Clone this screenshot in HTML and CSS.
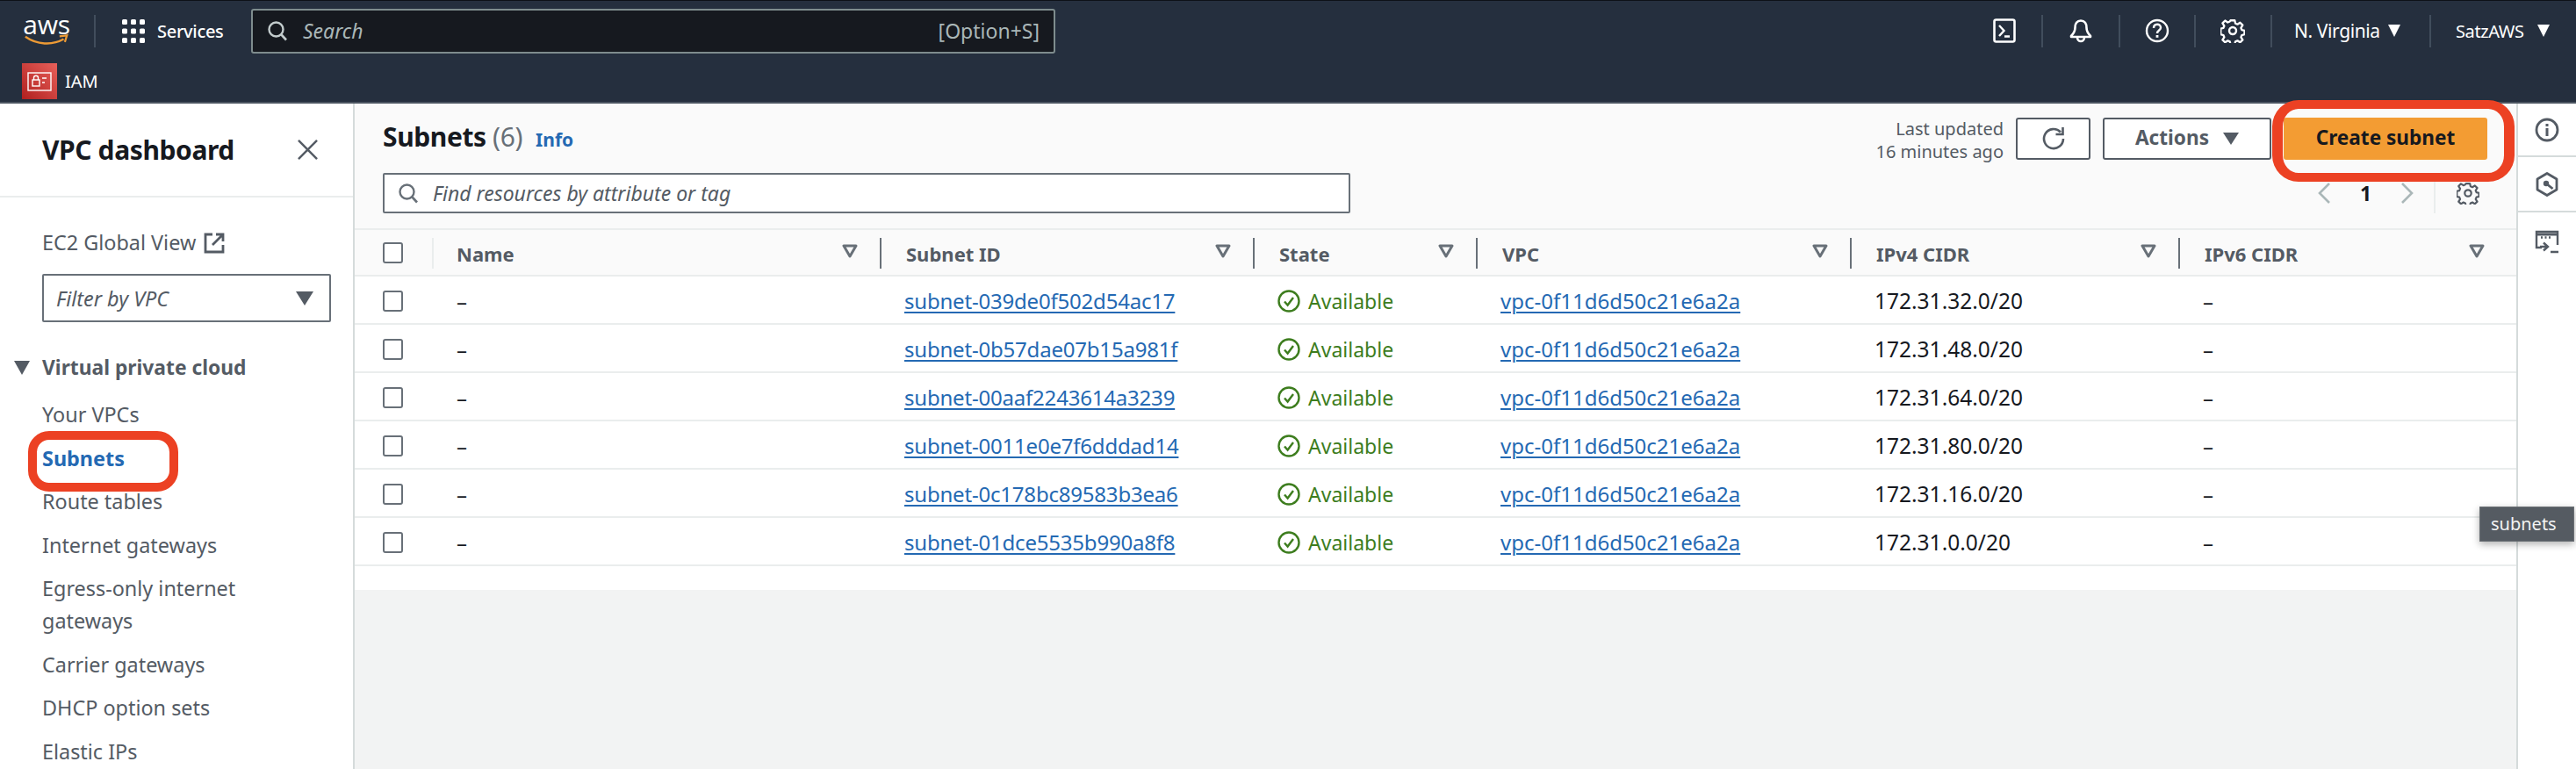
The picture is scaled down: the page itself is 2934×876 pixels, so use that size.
FILE: index.html
```html
<!DOCTYPE html>
<html lang="en">
<head>
<meta charset="utf-8">
<title>Subnets | VPC Console</title>
<link rel="stylesheet" href="styles.css">
</head>
<body>
<svg class="sprite" xmlns="http://www.w3.org/2000/svg">
  <symbol id="i-search" viewBox="0 0 24 24"><circle cx="10.5" cy="10.5" r="8" fill="none" stroke="currentColor" stroke-width="2.4"/><path d="M16.5 16.5 22 22.5" fill="none" stroke="currentColor" stroke-width="2.6"/></symbol>
  <symbol id="i-filter" viewBox="0 0 18 16"><path d="M2 2h14L9 14z" fill="none" stroke="currentColor" stroke-width="3" stroke-linejoin="round"/></symbol>
  <symbol id="i-ok" viewBox="0 0 26 26"><circle cx="13" cy="13" r="11.5" fill="none" stroke="currentColor" stroke-width="2.4"/><path d="M8 13.5l3.6 4L18 9" fill="none" stroke="currentColor" stroke-width="2.4"/></symbol>
  <symbol id="i-gear" viewBox="0 0 28 28"><path d="M11.5 2h5l.8 3.6 2.4 1 3.1-2 3 3-2 3.200 1 2.400 3.200.8v4.500l-3.200.8-1 2.400 2 3.100-3 3-3.100-2-2.400 1-.8 3.200h-5l-.8-3.200-2.400-1-3.100 2-3-3 2-3.100-1-2.400-3.200-.8V11.700l3.200-.8 1-2.400-2-3.200 3-3 3.100 2 2.400-1z" transform="translate(.3 .3) scale(.97)" fill="none" stroke="currentColor" stroke-width="2.4" stroke-linejoin="round"/><circle cx="14" cy="14" r="4" fill="none" stroke="currentColor" stroke-width="2.400"/></symbol>
</svg>

<div class="page">
  <header class="topnav">
    <div class="nav-main">
      <div class="logo">
        <span class="logo-text">aws</span>
        <svg class="logo-smile" viewBox="0 0 54 14"><path d="M1 3c14 10 33 11 47 3" fill="none" stroke="#ec9a35" stroke-width="2.600"/><path d="M43 2.500l9-1-2.500 8" fill="none" stroke="#ec9a35" stroke-width="2.400"/></svg>
      </div>
      <span class="nav-sep nav-sep-logo"></span>
      <svg class="grid-icon" viewBox="0 0 26 27"><g fill="#fff"><rect width="6" height="6" rx="1.500"/><rect x="10" width="6" height="6" rx="1.500"/><rect x="20" width="6" height="6" rx="1.500"/><rect y="10.500" width="6" height="6" rx="1.500"/><rect x="10" y="10.500" width="6" height="6" rx="1.500"/><rect x="20" y="10.500" width="6" height="6" rx="1.500"/><rect y="21" width="6" height="6" rx="1.500"/><rect x="10" y="21" width="6" height="6" rx="1.500"/><rect x="20" y="21" width="6" height="6" rx="1.500"/></g></svg>
      <span class="services">Services</span>
      <div class="search">
        <svg class="search-icon"><use href="#i-search"/></svg>
        <span class="search-text">Search</span>
        <span class="search-key">[Option+S]</span>
      </div>
      <div class="nav-right">
        <svg class="nav-icon nav-term" viewBox="0 0 26 28"><rect x="1.500" y="1.500" width="23" height="25" rx="2" fill="none" stroke="#fff" stroke-width="2.600"/><path d="M7 8l5.500 6L7 20M13 20.500h6" fill="none" stroke="#fff" stroke-width="2.400"/></svg>
        <span class="nav-sep nav-sep-a"></span>
        <svg class="nav-icon nav-bell" viewBox="0 0 28 28"><path d="M14 2.500c-4.500 0-6.500 3.500-6.500 8 0 5-2 7-4.500 9.500v1h22v-1c-2.500-2.500-4.500-4.500-4.500-9.500 0-4.500-2-8-6.500-8z" fill="none" stroke="#fff" stroke-width="2.600" stroke-linejoin="round"/><path d="M10 21.500c0 6 8 6 8 0" fill="none" stroke="#fff" stroke-width="2.600"/></svg>
        <span class="nav-sep nav-sep-b"></span>
        <svg class="nav-icon nav-help" viewBox="0 0 28 28"><circle cx="14" cy="14" r="12" fill="none" stroke="#fff" stroke-width="2.400"/><path d="M10 11c0-5.500 8-5.500 8-.5 0 3-4 3-4 6.500" fill="none" stroke="#fff" stroke-width="2.400"/><rect x="12.600" y="19" width="2.800" height="2.800" fill="#fff"/></svg>
        <span class="nav-sep nav-sep-c"></span>
        <svg class="nav-icon nav-gear"><use href="#i-gear"/></svg>
        <span class="nav-sep nav-sep-d"></span>
        <span class="nav-label region">N. Virginia</span>
        <span class="caret caret-white caret-region"></span>
        <span class="nav-sep nav-sep-e"></span>
        <span class="nav-label user">SatzAWS</span>
        <span class="caret caret-white caret-user"></span>
      </div>
    </div>
    <div class="nav-sub">
      <svg class="iam-icon" viewBox="0 0 40 41"><defs><linearGradient id="iamg" x1="0" y1="1" x2="1" y2="0"><stop offset="0" stop-color="#b0201f"/><stop offset="1" stop-color="#e8605a"/></linearGradient></defs><rect width="40" height="41" fill="url(#iamg)"/><rect x="7" y="11" width="26" height="20" fill="none" stroke="#fff" stroke-width="1.400"/><rect x="12" y="19" width="8" height="7" fill="none" stroke="#fff" stroke-width="1.400"/><path d="M13.500 19v-2.500c0-3 5-3 5 0V19M23 17h5M23 22h3" fill="none" stroke="#fff" stroke-width="1.400"/></svg>
      <span class="iam-label">IAM</span>
    </div>
  </header>

  <div class="shell">
    <aside class="side">
      <div class="side-head">
        <h2 class="side-title">VPC dashboard</h2>
        <svg class="side-close" viewBox="0 0 24 24"><path d="M1 1l22 22M23 1 1 23" fill="none" stroke="#545b64" stroke-width="2.600"/></svg>
      </div>
      <div class="side-body">
        <div class="global-view">
          <span>EC2 Global View</span>
          <svg class="ext-icon" viewBox="0 0 24 24"><path d="M10 2H2v20h20v-8" fill="none" stroke="#545b64" stroke-width="2.800"/><path d="M14 2h8v8M22 2 10 14" fill="none" stroke="#545b64" stroke-width="2.800"/></svg>
        </div>
        <div class="vpc-filter">
          <span class="vpc-filter-text">Filter by VPC</span>
          <span class="caret caret-grey caret-filter"></span>
        </div>
        <div class="section-head">
          <span class="caret caret-grey caret-section"></span>
          <span>Virtual private cloud</span>
        </div>
        <ul class="side-list">
          <li>Your VPCs</li>
          <li class="active">Subnets</li>
          <li>Route tables</li>
          <li>Internet gateways</li>
          <li>Egress-only internet gateways</li>
          <li>Carrier gateways</li>
          <li>DHCP option sets</li>
          <li>Elastic IPs</li>
        </ul>
      </div>
    </aside>

    <main class="content">
      <section class="panel-head">
        <div class="head-row">
          <div class="title-wrap">
            <h1 class="title">Subnets <span class="count">(6)</span></h1>
            <a class="info">Info</a>
          </div>
          <div class="head-actions">
            <div class="updated">Last updated<br>16 minutes ago</div>
            <button class="btn btn-refresh"><svg class="refresh-icon" viewBox="0 0 28 28"><path d="M22 6.500A11 11 0 1 0 25 14" fill="none" stroke="#545b64" stroke-width="2.600"/><path d="M24.500 1v8h-8" fill="none" stroke="#545b64" stroke-width="2.600"/></svg></button>
            <button class="btn btn-actions">Actions <span class="caret caret-grey caret-actions"></span></button>
            <button class="btn btn-primary">Create subnet</button>
          </div>
        </div>
        <div class="tool-row">
          <div class="find">
            <svg class="find-icon"><use href="#i-search"/></svg>
            <span class="find-text">Find resources by attribute or tag</span>
          </div>
          <div class="pager">
            <svg class="pg-arrow" viewBox="0 0 16 26"><path d="M14 2 3 13l11 11" fill="none" stroke="#aab7b8" stroke-width="2.600"/></svg>
            <span class="pg-num">1</span>
            <svg class="pg-arrow" viewBox="0 0 16 26"><path d="m2 2 11 11L2 24" fill="none" stroke="#aab7b8" stroke-width="2.600"/></svg>
            <span class="pg-sep"></span>
            <svg class="pg-gear"><use href="#i-gear"/></svg>
          </div>
        </div>
      </section>

      <div class="table">
        <div class="tr thead">
          <div class="td td-check"><span class="check"></span></div>
          <div class="td th th-name">Name<svg class="filter"><use href="#i-filter"/></svg></div>
          <div class="td th">Subnet ID<svg class="filter"><use href="#i-filter"/></svg></div>
          <div class="td th">State<svg class="filter"><use href="#i-filter"/></svg></div>
          <div class="td th">VPC<svg class="filter"><use href="#i-filter"/></svg></div>
          <div class="td th">IPv4 CIDR<svg class="filter"><use href="#i-filter"/></svg></div>
          <div class="td th">IPv6 CIDR<svg class="filter"><use href="#i-filter"/></svg></div>
        </div>
        <div class="tr"><div class="td td-check"><span class="check"></span></div><div class="td">–</div><div class="td"><a class="link link-subnet">subnet-039de0f502d54ac17</a></div><div class="td state"><svg class="ok"><use href="#i-ok"/></svg>Available</div><div class="td"><a class="link">vpc-0f11d6d50c21e6a2a</a></div><div class="td cidr">172.31.32.0/20</div><div class="td">–</div></div>
        <div class="tr"><div class="td td-check"><span class="check"></span></div><div class="td">–</div><div class="td"><a class="link link-subnet">subnet-0b57dae07b15a981f</a></div><div class="td state"><svg class="ok"><use href="#i-ok"/></svg>Available</div><div class="td"><a class="link">vpc-0f11d6d50c21e6a2a</a></div><div class="td cidr">172.31.48.0/20</div><div class="td">–</div></div>
        <div class="tr"><div class="td td-check"><span class="check"></span></div><div class="td">–</div><div class="td"><a class="link link-subnet">subnet-00aaf2243614a3239</a></div><div class="td state"><svg class="ok"><use href="#i-ok"/></svg>Available</div><div class="td"><a class="link">vpc-0f11d6d50c21e6a2a</a></div><div class="td cidr">172.31.64.0/20</div><div class="td">–</div></div>
        <div class="tr"><div class="td td-check"><span class="check"></span></div><div class="td">–</div><div class="td"><a class="link link-subnet">subnet-0011e0e7f6dddad14</a></div><div class="td state"><svg class="ok"><use href="#i-ok"/></svg>Available</div><div class="td"><a class="link">vpc-0f11d6d50c21e6a2a</a></div><div class="td cidr">172.31.80.0/20</div><div class="td">–</div></div>
        <div class="tr"><div class="td td-check"><span class="check"></span></div><div class="td">–</div><div class="td"><a class="link link-subnet">subnet-0c178bc89583b3ea6</a></div><div class="td state"><svg class="ok"><use href="#i-ok"/></svg>Available</div><div class="td"><a class="link">vpc-0f11d6d50c21e6a2a</a></div><div class="td cidr">172.31.16.0/20</div><div class="td">–</div></div>
        <div class="tr"><div class="td td-check"><span class="check"></span></div><div class="td">–</div><div class="td"><a class="link link-subnet">subnet-01dce5535b990a8f8</a></div><div class="td state"><svg class="ok"><use href="#i-ok"/></svg>Available</div><div class="td"><a class="link">vpc-0f11d6d50c21e6a2a</a></div><div class="td cidr">172.31.0.0/20</div><div class="td">–</div></div>
        <div class="table-foot"></div>
      </div>
    </main>

    <aside class="rail">
      <div class="rail-item rail-first"><svg class="rail-icon" viewBox="0 0 28 28"><circle cx="14" cy="14" r="12" fill="none" stroke="#545b64" stroke-width="2.800"/><rect x="12.500" y="12" width="3" height="9" fill="#545b64"/><rect x="12.500" y="7" width="3" height="3" fill="#545b64"/></svg></div>
      <div class="rail-item"><svg class="rail-icon" viewBox="0 0 28 28"><path d="M14 1.500 25 8v12l-11 6.500L3 20V8z" fill="none" stroke="#545b64" stroke-width="2.800" stroke-linejoin="round"/><circle cx="13" cy="13" r="3.200" fill="#545b64"/><path d="m13 13 7.500 6" fill="none" stroke="#545b64" stroke-width="2.800"/></svg></div>
      <div class="rail-item rail-last"><svg class="rail-icon" viewBox="0 0 28 28"><path d="M8 20H2V2h24v15" fill="none" stroke="#545b64" stroke-width="2.400"/><path d="M2 5h24" stroke="#545b64" stroke-width="3"/><path d="M7 8.500h2M11.500 8.500h2M16 8.500h2" stroke="#545b64" stroke-width="2.400"/><path d="M6 19h8M10 14.500l5 4.500-5 4.500M18 25h9" fill="none" stroke="#545b64" stroke-width="2.400"/></svg></div>
    </aside>
  </div>

  <div class="tooltip">subnets</div>
  <div class="mark mark-create"></div>
  <div class="mark mark-subnets"></div>
</div>
</body>
</html>
```

FILE: styles.css
```css
* { box-sizing: border-box; }
html, body { margin: 0; padding: 0; }
body { font-family: "Noto Sans", "Open Sans", sans-serif; color: #16191f; background: #f2f3f3; }
.sprite { position: absolute; width: 0; height: 0; overflow: hidden; }
.page { position: relative; width: 2934px; height: 876px; overflow: hidden; display: flex; flex-direction: column; }

/* top navigation */
.topnav { height: 118px; flex: none; background: #252f3e; border-top: 1px solid #0d1117; border-bottom: 2px solid #4b5460; color: #fff; }
.nav-main { height: 70px; display: flex; align-items: center; padding-left: 26px; }
.logo { width: 54px; height: 36px; display: flex; flex-direction: column; align-items: center; margin-top: -4px; }
.logo-text { font-family: "Open Sans", sans-serif; font-size: 30px; line-height: 23px; letter-spacing: -0.3px; color: #fff; }
.logo-smile { width: 54px; height: 13px; }
.nav-sep { width: 2px; height: 37px; background: #414d5c; flex: none; }
.nav-sep-logo { margin-left: 27px; margin-top: -2px; }
.grid-icon { width: 26px; height: 27px; margin-left: 30px; margin-top: -2px; flex: none; }
.services { font-size: 20px; font-weight: 500; margin-left: 14px; margin-top: -2px; width: 78px; white-space: nowrap; letter-spacing: -0.3px; }
.search { width: 916px; height: 51px; margin-left: 29px; margin-top: -2px; background: #16191f; border: 2px solid #7e8c8d; border-radius: 3px; display: flex; align-items: center; padding: 0 16px; color: #aab7b8; flex: none; }
.search-icon { width: 24px; height: 26px; color: #c3cccd; flex: none; }
.search-text { font-style: italic; font-size: 23px; margin-left: 17px; flex: 1; }
.search-key { font-size: 23px; color: #aab7b8; }
.nav-right { flex: 1; display: flex; align-items: center; margin-top: -2px; position: relative; }
.nav-icon { height: 28px; width: 28px; flex: none; }
.nav-term { margin-left: 1068px; width: 26px; }
.nav-sep-a { margin-left: 29px; }
.nav-bell { margin-left: 29px; }
.nav-sep-b { margin-left: 29px; }
.nav-help { margin-left: 28px; }
.nav-sep-c { margin-left: 28px; }
.nav-gear { margin-left: 28px; }
.nav-sep-d { margin-left: 29px; }
.nav-label { font-size: 20px; white-space: nowrap; }
.region { margin-left: 25px; width: 98px; font-size: 21px; letter-spacing: -0.4px; }
.caret { width: 0; height: 0; display: inline-block; border-left: 7px solid transparent; border-right: 7px solid transparent; border-top: 14px solid #545b64; flex: none; }
.caret-white { border-top-color: #fff; }
.caret-region { margin-left: 9px; }
.nav-sep-e { margin-left: 33px; }
.user { margin-left: 28px; width: 84px; letter-spacing: -0.4px; }
.caret-user { margin-left: 9px; }
.nav-sub { height: 45px; display: flex; align-items: flex-start; padding-left: 25px; margin-top: 1px; }
.iam-icon { width: 40px; height: 41px; flex: none; }
.iam-label { font-size: 20px; margin-left: 9px; line-height: 41px; }

/* shell */
.shell { flex: 1; display: flex; min-height: 0; }

/* sidebar */
.side { width: 404px; flex: none; background: #fff; border-right: 2px solid #d5dbdb; overflow: hidden; }
.side-head { height: 107px; border-bottom: 2px solid #eaeded; display: flex; align-items: center; justify-content: space-between; padding: 0 40px 0 48px; }
.side-title { margin: 0; font-size: 30px; font-weight: 700; letter-spacing: -0.4px; white-space: nowrap; }
.side-close { width: 23px; height: 23px; }
.side-body { padding: 33px 0 0 48px; font-size: 23.4px; color: #545b64; }
.global-view { display: flex; align-items: center; line-height: 37px; }
.ext-icon { width: 24px; height: 24px; margin-left: 9px; }
.vpc-filter { width: 329px; height: 55px; margin-top: 17px; border: 2px solid #687078; border-radius: 2px; display: flex; align-items: center; justify-content: space-between; padding: 0 18px 0 14px; }
.vpc-filter-text { font-style: italic; color: #545b64; }
.caret-filter { border-left-width: 10px; border-right-width: 10px; border-top-width: 16px; }
.section-head { display: flex; align-items: center; margin: 33px 0 0 -32px; font-weight: 700; font-size: 22.8px; line-height: 38px; white-space: nowrap; }
.caret-section { margin-right: 14px; border-left-width: 9px; border-right-width: 9px; border-top-width: 16px; }
.side-list { list-style: none; margin: 16px 0 0; padding: 0 60px 0 0; }
.side-list li { line-height: 37px; margin-bottom: 12.5px; }
.side-list .active { color: #2469b3; font-weight: 700; }

/* content */
.content { flex: 1; min-width: 0; display: flex; flex-direction: column; }
.panel-head { height: 144px; flex: none; background: #fafafa; border-bottom: 2px solid #eaeded; padding: 16px 33px 0 32px; }
.head-row { display: flex; justify-content: space-between; align-items: flex-start; height: 63px; }
.title-wrap { display: flex; align-items: baseline; height: 48px; padding-top: 2px; }
.title { margin: 0; font-size: 30px; line-height: 40px; font-weight: 700; letter-spacing: -0.4px; white-space: nowrap; }
.count { font-weight: 400; color: #687078; }
.info { margin-left: 15px; font-size: 21px; font-weight: 700; color: #2469b3; }
.head-actions { display: flex; align-items: flex-start; }
.updated { text-align: right; font-size: 20px; line-height: 26px; color: #545b64; margin-right: 14px; }
.btn { height: 48px; background: #fff; border: 2px solid #545b64; border-radius: 3px; font-family: inherit; font-size: 22.6px; font-weight: 700; color: #545b64; display: flex; align-items: center; justify-content: center; padding: 0 0 3px; }
.btn-refresh { width: 85px; padding: 0; }
.refresh-icon { width: 28px; height: 28px; }
.btn-actions { width: 192px; margin-left: 14px; }
.caret-actions { margin-left: 16px; margin-top: 3px; border-left-width: 9px; border-right-width: 9px; border-top-width: 14px; }
.btn-primary { width: 232px; margin-left: 14px; background: #f39c33; border-color: #f39c33; color: #16191f; }
.tool-row { display: flex; justify-content: space-between; align-items: center; height: 46px; margin-top: 0; padding-right: 9px; }
.find { width: 1102px; height: 46px; background: #fff; border: 2px solid #687078; border-radius: 2px; display: flex; align-items: center; padding-left: 15px; flex: none; }
.find-icon { width: 24px; height: 26px; color: #687078; flex: none; }
.find-text { font-style: italic; font-size: 23px; color: #545b64; margin-left: 16px; }
.pager { display: flex; align-items: center; height: 46px; }
.pg-arrow { width: 16px; height: 26px; }
.pg-num { width: 79px; text-align: center; font-size: 23px; font-weight: 700; color: #16191f; }
.pg-sep { width: 2px; height: 46px; background: #eaeded; margin-left: 22px; }
.pg-gear { width: 26px; height: 26px; margin-left: 24px; color: #545b64; }

/* table */
.table { flex: 1; display: flex; flex-direction: column; }
.tr { display: grid; grid-template-columns: 88px 510px 425px 254px 426px 374px 374px; height: 55px; padding-top: 2px; flex: none; background: #fff; border-bottom: 2px solid #eaeded; align-items: center; font-size: 24px; color: #16191f; }
.tr.thead { height: 53px; padding-top: 0; background: #fafafa; }
.td { padding-left: 28px; white-space: nowrap; min-width: 0; }
.td-check { padding-left: 32px; height: 100%; display: flex; align-items: center; padding-top: 1px; }
.check { width: 23px; height: 24px; border: 2px solid #687078; border-radius: 3px; background: #fff; display: block; }
.th { font-weight: 700; color: #545b64; font-size: 22px; display: flex; align-items: center; justify-content: space-between; height: 35px; margin-top: 2px; border-left: 2px solid #687078; padding-right: 25px; position: relative; }
.thead .td-check + .th { border-left-color: #eaeded; }
.th-name { padding-left: 26px; }
.filter { width: 18px; height: 16px; color: #687078; margin-top: -6px; }
.link { color: #2469b3; text-decoration: underline; text-decoration-thickness: 2px; text-underline-offset: 3px; }
.link-subnet { letter-spacing: -0.2px; }
.cidr { font-size: 24.5px; }
.state { color: #3d7d1e; display: flex; align-items: center; padding-left: 28px; font-size: 23px; }
.ok { width: 26px; height: 26px; margin-right: 9px; flex: none; }
.table-foot { height: 27px; background: #fff; flex: none; }

/* right rail */
.rail { width: 68px; flex: none; background: #fff; border-left: 2px solid #d5dbdb; display: flex; flex-direction: column; }
.rail-item { height: 63px; border-bottom: 2px solid #d5dbdb; display: flex; align-items: center; justify-content: center; flex: none; }
.rail-first { height: 61px; }
.rail-last { border-bottom: 0; padding-top: 4px; }
.rail-icon { width: 28px; height: 28px; }

/* overlays */
.tooltip { position: absolute; left: 2824px; top: 577px; width: 108px; height: 40px; background: #555b62; color: #f2f3f3; font-size: 20px; line-height: 38px; padding-left: 12px; box-shadow: 0 3px 8px rgba(0,0,0,.3); border: 1px solid #6b7075; }
.mark { position: absolute; border: 11px solid #ec4123; }
.mark-create { left: 2588px; top: 114px; width: 276px; height: 93px; border-radius: 30px; border-width: 10px 12px; }
.mark-subnets { left: 32px; top: 491px; width: 171px; height: 69px; border-radius: 24px; border-width: 10px; }
```
